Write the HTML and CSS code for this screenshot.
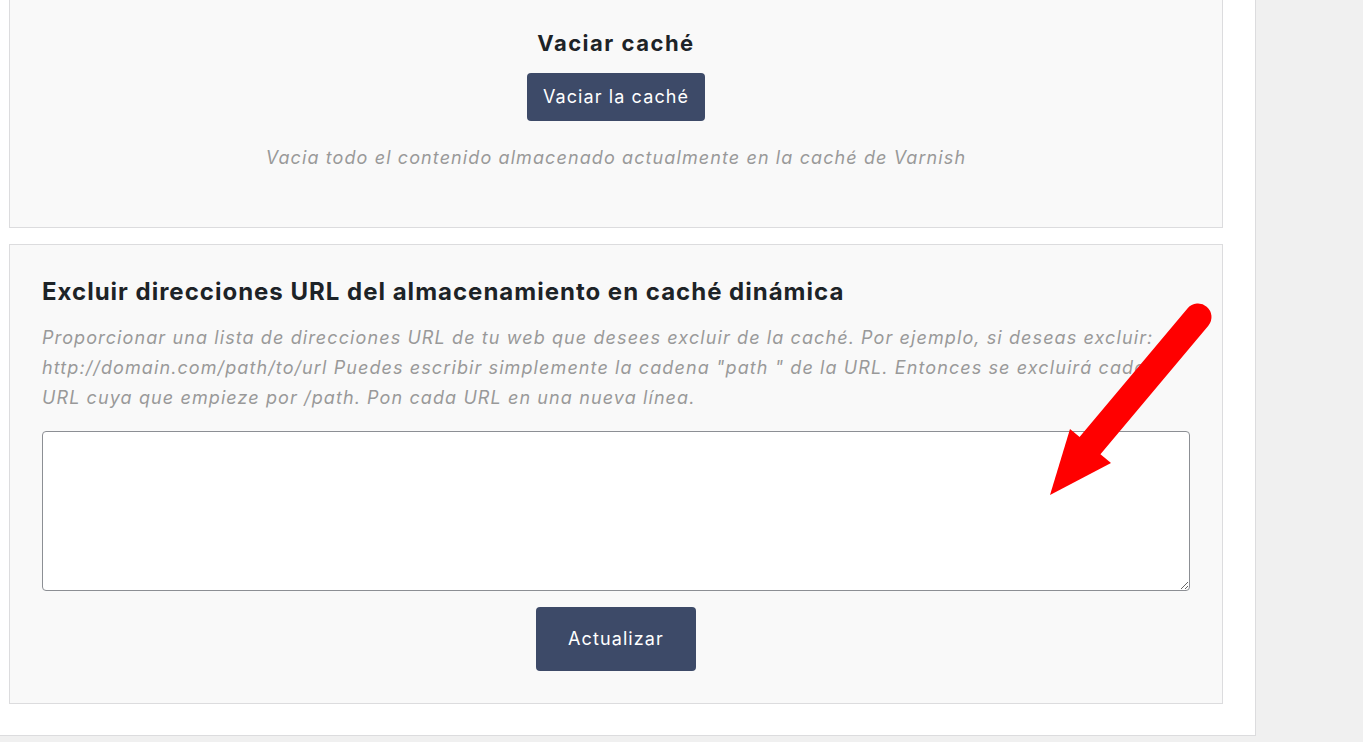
FILE: index.html
```html
<!doctype html>
<html lang="es">
  <head>
    <meta charset="UTF-8" />
    <meta name="viewport" content="width=device-width, initial-scale=1.0" />
    <title>Caché</title>
    <link rel="stylesheet" href="styles.css">
  </head>
  <body>
    <div class="wrap">
      <div class="card card-center">
        <h3 class="card-title">Vaciar caché</h3>
        <button class="btn btn-sm">Vaciar la caché</button>
        <p class="desc">Vacia todo el contenido almacenado actualmente en la caché de Varnish</p>
      </div>

      <div class="card">
        <h3 class="card-heading">Excluir direcciones URL del almacenamiento en caché dinámica</h3>
        <p class="desc desc-left">Proporcionar una lista de direcciones URL de tu web que desees excluir de la caché. Por ejemplo, si deseas excluir: http://domain.com/path/to/url Puedes escribir simplemente la cadena "path " de la URL. Entonces se excluirá cada URL cuya que empieze por /path. Pon cada URL en una nueva línea.</p>
        <textarea class="urls"></textarea>
        <div class="actions">
          <button class="btn btn-lg">Actualizar</button>
        </div>
      </div>
    </div>

    <!-- flecha de anotación -->
    <svg class="arrow" width="1363" height="742" viewBox="0 0 1363 742">
      <line x1="1198" y1="317" x2="1088" y2="448" stroke="#ff0000" stroke-width="27" stroke-linecap="round" />
      <polygon points="1070,429 1111,463 1050,495" fill="#ff0000" />
    </svg>
  </body>
</html>
```

FILE: styles.css
```css
*,
*::before,
*::after {
  box-sizing: border-box;
}
html,
body {
  margin: 0;
  padding: 0;
}
body {
  background-color: #f0f0f0;
  font-family: Inter, "Liberation Sans", Arial, sans-serif;
  color: #1d2327;
  overflow: hidden;
  height: 742px;
  position: relative;
}
.wrap {
  width: 1256px;
  background-color: #fff;
  border-right: 1px solid #dcdcde;
  border-bottom: 1px solid #dcdcde;
  padding: 0 32px 31px 9px;
}
.card {
  background-color: #f9f9f9;
  border: 1px solid #dcdcde;
  padding: 32px;
  margin-top: 16px;
}
.card-center {
  text-align: center;
  margin-top: -2px;
  padding-top: 31px;
  padding-bottom: 54px;
}
.card-title {
  margin: 0 0 17px;
  font-size: 22px;
  line-height: 26px;
  font-weight: 700;
  letter-spacing: 1.5px;
}
.card-heading {
  margin: 0 0 17px;
  font-size: 24px;
  line-height: 29px;
  font-weight: 700;
  letter-spacing: 1px;
}
.desc {
  margin: 22px 0 0;
  font-size: 18px;
  line-height: 30px;
  font-style: italic;
  color: #999;
  letter-spacing: 1.1px;
}
.desc-left {
  margin: 0;
}
.btn {
  background-color: #3d4a68;
  color: #fff;
  border: 0;
  border-radius: 4px;
  font-family: inherit;
  font-size: 18px;
  letter-spacing: 1.1px;
  cursor: pointer;
}
.btn-sm {
  line-height: 24px;
  padding: 12px 16px;
}
.btn-lg {
  line-height: 28px;
  padding: 18px 32px;
}
.urls {
  display: block;
  width: 100%;
  height: 160px;
  margin-top: 18px;
  border: 1px solid #8c8f94;
  border-radius: 4px;
  background-color: #fff;
}
.actions {
  text-align: center;
  margin-top: 16px;
  line-height: 0;
}
.arrow {
  position: absolute;
  left: 0;
  top: 0;
  pointer-events: none;
}
```
